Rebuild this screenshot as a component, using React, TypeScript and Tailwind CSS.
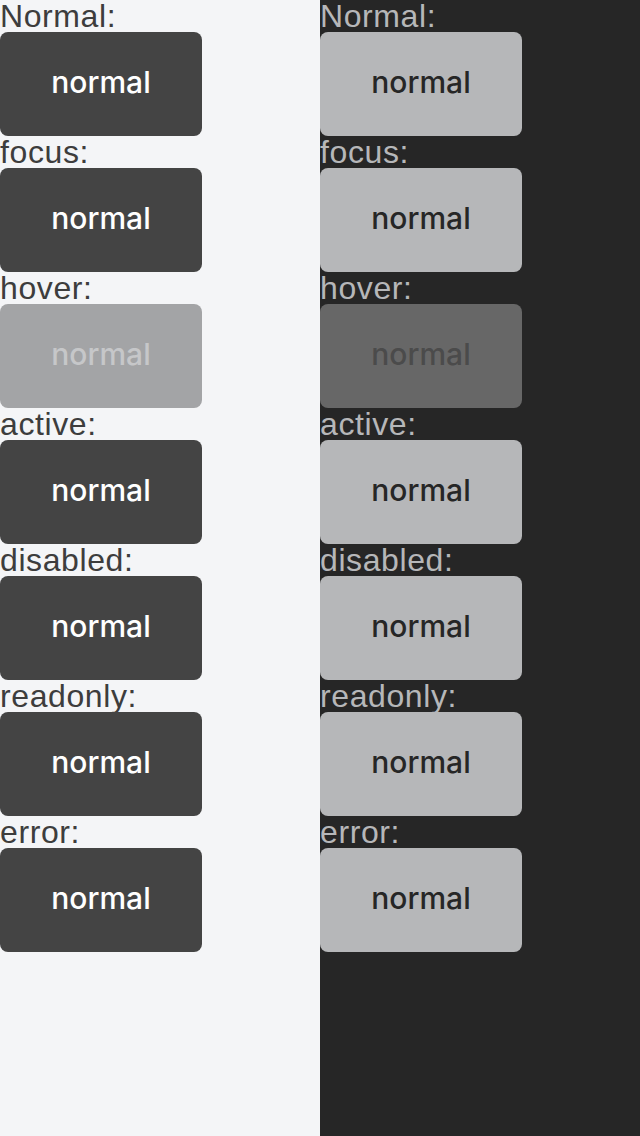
const STATES = ["Normal:", "focus:", "hover:", "active:", "disabled:", "readonly:", "error:"];

function Column({ dark }: { dark: boolean }) {
  return (
    <div className={`flex w-[320px] flex-col ${dark ? "bg-[#262626]" : "bg-[#f4f5f7]"}`}>
      {STATES.map((label) => {
        const hover = label === "hover:";
        let btn = dark ? "bg-[#b6b7b9] text-[#262626]" : "bg-[#444444] text-white";
        if (hover) btn = dark ? "bg-[#676767] text-[#4b4b4b]" : "bg-[#a3a4a6] text-[#c6c7c9]";
        return (
          <div key={label} className="flex flex-col">
            <div
              className={`h-[32px] text-[32px] leading-[32px] tracking-[0.6px] ${dark ? "text-[#b6b7b9]" : "text-[#3d3d3d]"}`}
            >
              {label}
            </div>
            <button
              className={`flex h-[104px] w-[202px] items-center justify-center rounded-[8px] pb-[4px] font-['Inter',sans-serif] text-[30px] font-medium ${btn}`}
            >
              normal
            </button>
          </div>
        );
      })}
    </div>
  );
}

export default function App() {
  return (
    <div className="flex h-[1136px] w-[640px] font-['Liberation_Sans',Arial,sans-serif]">
      <Column dark={false} />
      <Column dark />
    </div>
  );
}
